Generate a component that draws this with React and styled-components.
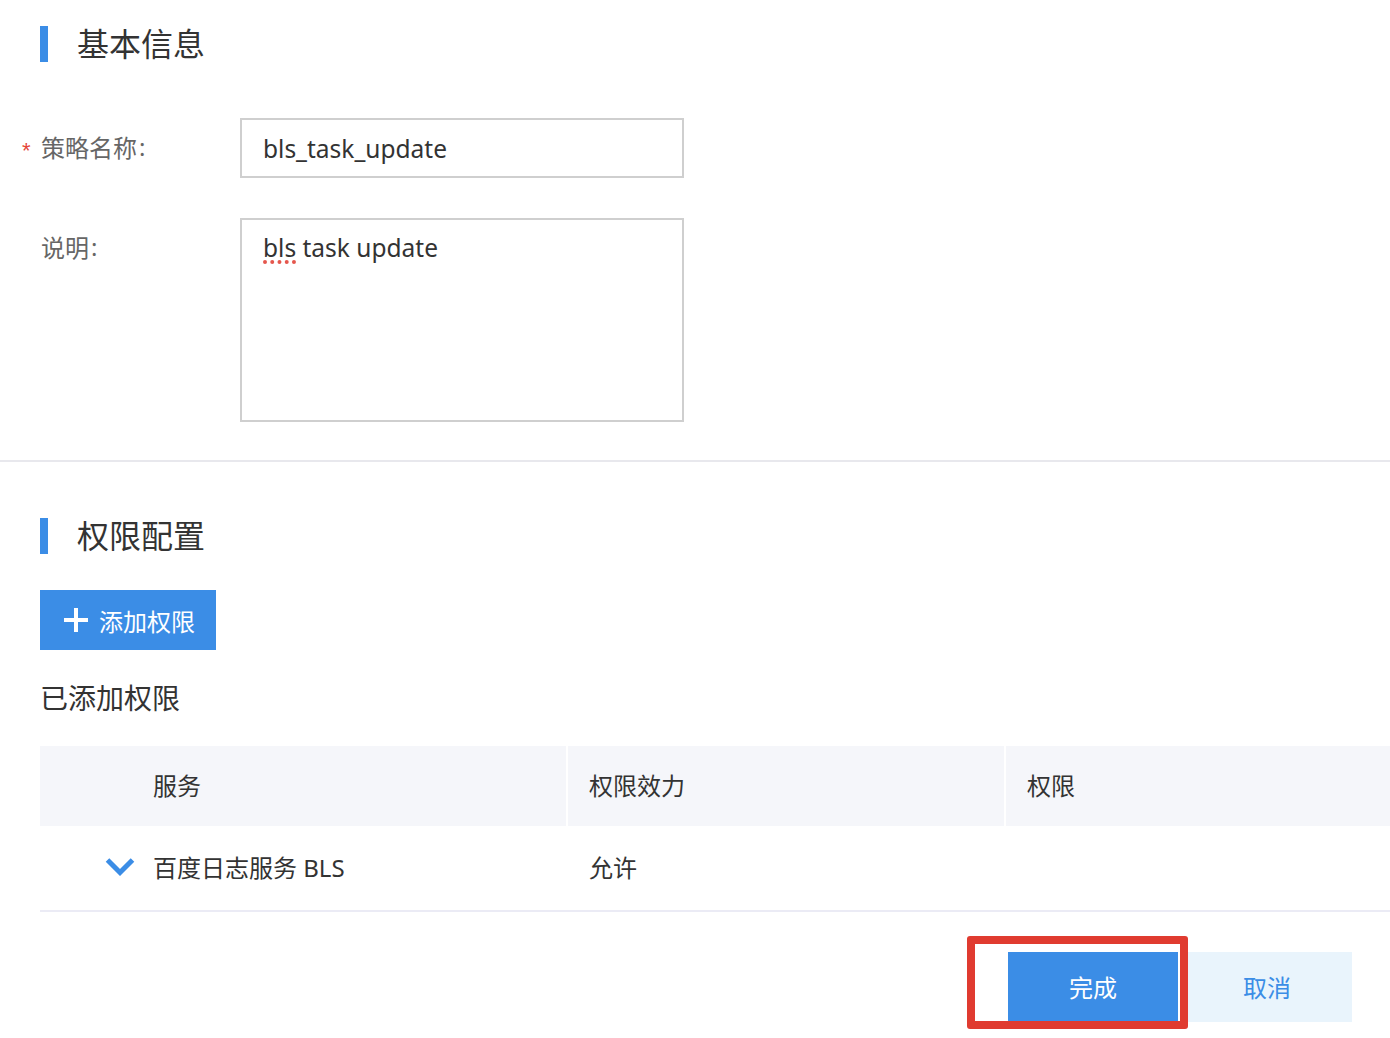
import React from "react";
import styled, { createGlobalStyle } from "styled-components";

const GlobalStyle = createGlobalStyle`
  html, body {
    margin: 0;
    padding: 0;
    background: #ffffff;
  }
  body {
    font-family: "Noto Sans", "Noto Sans CJK SC", sans-serif;
    color: #333333;
  }
  * { box-sizing: border-box; }
`;

const BLUE = "#3b8de6";

const Page = styled.div`
  width: 1390px;
  min-height: 1038px;
  overflow: hidden;
`;

const Section = styled.section`
  padding-top: ${(p) => p.$top}px;
`;

const SectionTitle = styled.h2`
  margin: 0;
  display: flex;
  align-items: center;
  gap: 29px;
  height: 36px;
  padding-left: 40px;
  font-size: 32px;
  font-weight: 400;
  line-height: 36px;
  color: #333333;
  &::before {
    content: "";
    display: block;
    width: 8px;
    height: 36px;
    background: ${BLUE};
  }
`;

const Form = styled.div`
  margin-top: 56px;
  display: flex;
  flex-direction: column;
  gap: 40px;
`;

const FormRow = styled.div`
  display: grid;
  grid-template-columns: 240px 444px;
  align-items: start;
`;

const Label = styled.label`
  display: flex;
  align-items: center;
  height: 56px;
  padding-left: ${(p) => (p.$required ? 22 : 41)}px;
  font-size: 24px;
  color: #666666;
`;

const Colon = styled.span`
  margin-left: 2px;
`;

const Star = styled.span`
  width: 19px;
  color: #e5453a;
  font-size: 22px;
  line-height: 22px;
  align-self: flex-start;
  margin-top: 22px;
  font-family: "Liberation Sans", sans-serif;
`;

const TextInput = styled.input`
  width: 444px;
  height: 60px;
  border: 2px solid #cfcfcf;
  border-radius: 0;
  padding: 0 21px;
  font-family: "Noto Sans", "Noto Sans CJK SC", sans-serif;
  font-size: 24.5px;
  color: #333333;
  outline: none;
  background: #fff;
`;

const TextArea = styled.div`
  width: 444px;
  height: 204px;
  border: 2px solid #cfcfcf;
  padding: 0 21px;
  font-size: 24.5px;
  line-height: 56px;
  color: #333333;
  background: #fff;
`;

const Misspelled = styled.span`
  text-decoration: underline dotted #e5574d;
  text-decoration-thickness: 4px;
  text-underline-offset: 3px;
`;

const Divider = styled.hr`
  margin: 38px 0 0;
  border: 0;
  height: 2px;
  background: #e8e8ed;
`;

const Body = styled.div`
  padding-left: 40px;
`;

const AddButton = styled.button`
  margin-top: 36px;
  display: inline-flex;
  align-items: center;
  gap: 11px;
  width: 176px;
  height: 60px;
  padding: 0 0 0 24px;
  border: 0;
  border-radius: 0;
  background: ${BLUE};
  color: #ffffff;
  font-family: "Noto Sans", "Noto Sans CJK SC", sans-serif;
  font-size: 24px;
  cursor: pointer;
`;

const SubTitle = styled.h3`
  margin: 28px 0 0;
  font-size: 28px;
  font-weight: 400;
  line-height: 40px;
  color: #333333;
`;

const Table = styled.div`
  margin-top: 28px;
  display: grid;
  grid-template-columns: 526px 438px 1fr;
`;

const HeadCell = styled.div`
  height: 80px;
  display: flex;
  align-items: center;
  background: #f5f6fa;
  font-size: 24px;
  color: #333333;
  padding-left: ${(p) => (p.$first ? 113 : 21)}px;
  padding-bottom: 3px;
  border-left: ${(p) => (p.$first ? "none" : "2px solid #ffffff")};
`;

const BodyCell = styled.div`
  height: 86px;
  display: flex;
  align-items: center;
  border-bottom: 2px solid #ebebf5;
  font-size: 24px;
  color: #333333;
  padding-left: ${(p) => (p.$first ? 65 : 23)}px;
  padding-bottom: 3px;
`;

const Chevron = styled.svg`
  width: 30px;
  height: 19px;
  margin-right: 18px;
  flex: none;
`;

const Footer = styled.div`
  margin-top: 40px;
  display: flex;
  justify-content: flex-end;
  gap: 10px;
  padding-right: 38px;
`;

const Highlighted = styled.div`
  position: relative;
`;

const HighlightBox = styled.div`
  position: absolute;
  top: -16px;
  left: -41px;
  right: -10px;
  bottom: -7px;
  border: 8px solid #e03b30;
  border-radius: 3px;
  pointer-events: none;
`;

const ActionButton = styled.button`
  height: 70px;
  width: ${(p) => p.$width}px;
  border: 0;
  border-radius: 0;
  display: flex;
  align-items: center;
  justify-content: center;
  padding: 0 ${(p) => (p.$primary ? 0 : 6)}px 2px 0;
  font-family: "Noto Sans", "Noto Sans CJK SC", sans-serif;
  font-size: 24px;
  background: ${(p) => (p.$primary ? BLUE : "#e9f4fc")};
  color: ${(p) => (p.$primary ? "#ffffff" : BLUE)};
  cursor: pointer;
`;

export default function App() {
  return (
    <Page>
      <GlobalStyle />
      <Section $top={26}>
        <SectionTitle>基本信息</SectionTitle>
        <Form>
          <FormRow>
            <Label $required>
              <Star>*</Star>策略名称<Colon>:</Colon>
            </Label>
            <TextInput value="bls_task_update" readOnly spellCheck={false} />
          </FormRow>
          <FormRow>
            <Label>
              说明<Colon>:</Colon>
            </Label>
            <TextArea role="textbox">
              <Misspelled>bls</Misspelled> task update
            </TextArea>
          </FormRow>
        </Form>
      </Section>
      <Divider />
      <Section $top={56}>
        <SectionTitle>权限配置</SectionTitle>
        <Body>
          <AddButton>
            <svg width="24" height="24" viewBox="0 0 24 24">
              <path d="M12 0v24M0 12h24" stroke="#ffffff" strokeWidth="4" fill="none" />
            </svg>
            添加权限
          </AddButton>
          <SubTitle>已添加权限</SubTitle>
          <Table>
            <HeadCell $first>服务</HeadCell>
            <HeadCell>权限效力</HeadCell>
            <HeadCell>权限</HeadCell>
            <BodyCell $first>
              <Chevron viewBox="0 0 30 19">
                <polyline
                  points="2.5,3 15,15.5 27.5,3"
                  fill="none"
                  stroke={BLUE}
                  strokeWidth="5"
                  strokeLinejoin="miter"
                />
              </Chevron>
              百度日志服务 BLS
            </BodyCell>
            <BodyCell>允许</BodyCell>
            <BodyCell></BodyCell>
          </Table>
        </Body>
      </Section>
      <Footer>
        <Highlighted>
          <ActionButton $primary $width={170}>完成</ActionButton>
          <HighlightBox />
        </Highlighted>
        <ActionButton $width={164}>取消</ActionButton>
      </Footer>
    </Page>
  );
}
